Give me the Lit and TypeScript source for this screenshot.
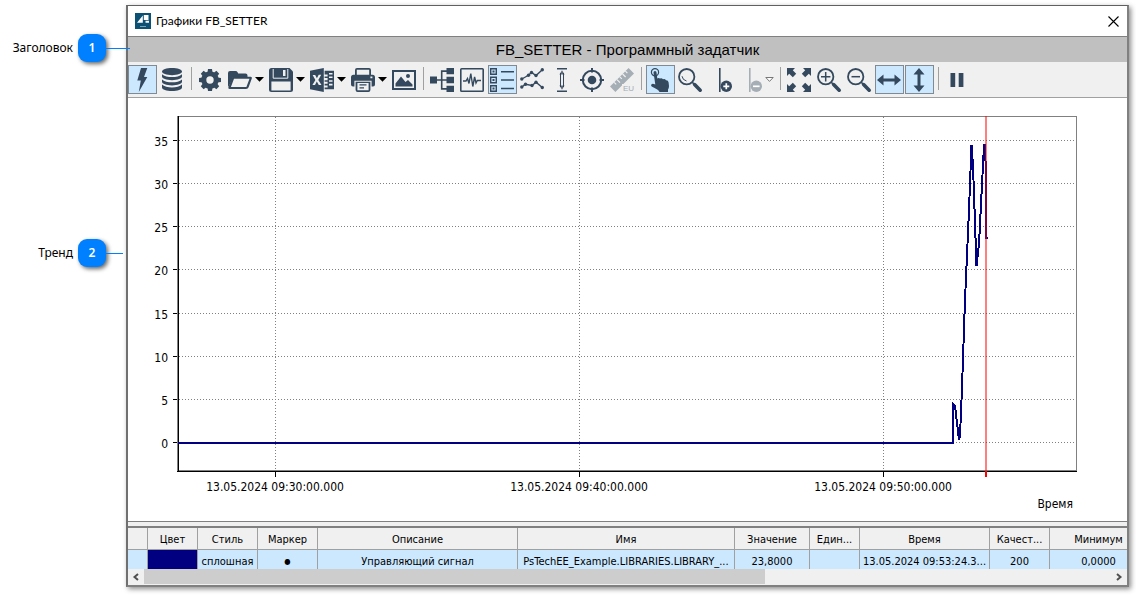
import { LitElement, html, svg, css, nothing } from "lit";
import type { SVGTemplateResult } from "lit";
import { customElement, property } from "lit/decorators.js";
import { classMap } from "lit/directives/class-map.js";

const magnifier = svg`
  <circle cx="8.7" cy="8.7" r="7.7" fill="none" stroke="currentColor" stroke-width="1.8"/>
  <path d="M14.2 14.2l2.2 2.2" stroke="currentColor" stroke-width="1.6"/>
  <path d="M16.6 16.6l5.6 5.6" stroke="currentColor" stroke-width="3.6" stroke-linecap="round"/>`;

const trendDots = (pts: number[][]) => svg`
  <polyline points=${pts.map((p) => p.join(",")).join(" ")} fill="none" stroke="currentColor" stroke-width="1.4"/>
  ${pts.map((p) => svg`<circle cx=${p[0]} cy=${p[1]} r="1.7"/>`)}`;

const ICONS: Record<string, SVGTemplateResult> = {
  bolt: svg`<path d="M11 0H17.3L14 9H17.3L8.8 24L10.8 12.6H7.3Z"/>`,
  database: svg`
    <path d="M2 3.6C2 1.5 6.5 0 12 0S22 1.5 22 3.6 17.5 7.2 12 7.2 2 5.7 2 3.6Z"/>
    <path d="M2 6.2C4 8.2 8 9 12 9S20 8.2 22 6.2V8.6C22 10.6 17.5 12.2 12 12.2S2 10.6 2 8.6Z"/>
    <path d="M2 11.4C4 13.4 8 14.2 12 14.2S20 13.4 22 11.4V13.8C22 15.8 17.5 17.4 12 17.4S2 15.8 2 13.8Z"/>
    <path d="M2 16.6C4 18.6 8 19.4 12 19.4S20 18.6 22 16.6V19.4C22 21.4 17.5 23 12 23S2 21.4 2 19.4Z"/>`,
  gear: svg`
    <circle cx="12" cy="12" r="6.2" fill="none" stroke="currentColor" stroke-width="5"/>
    ${[0, 45, 90, 135, 180, 225, 270, 315].map(
      (a) => svg`<path d="M9.4 5L10 1H14L14.6 5Z" transform="rotate(${a} 12 12)"/>`
    )}`,
  folder: svg`
    <path d="M0 19V5Q0 3 2 3H7.5Q9 3 9.6 4.2L10.2 5.4H17.5Q19.5 5.4 19.5 7.4V9H5L2 16Z"/>
    <path fill-rule="evenodd" d="M5.6 8.8H22.6Q24.4 8.8 23.8 10.6L20.6 19.2Q20 21 18 21H1.6Q-.2 21 .4 19.2L3.8 10.2Q4.3 8.8 5.6 8.8ZM6 10.8L2.9 19H18.4L21.5 10.8Z"/>`,
  save: svg`
    <path d="M2.5 0H20.5L24 3.5V21.5Q24 24 21.5 24H2.5Q0 24 0 21.5V2.5Q0 0 2.5 0Z"/>
    <path d="M4.2 1V10.2H18.8V1" fill="none" stroke="#f0f0f0"/>
    <path d="M14 2H16.5V8H14ZM2.4 13.4H21.6V22.4H2.4Z" fill="#f0f0f0"/>`,
  excel: svg`
    <path fill-rule="evenodd" d="M0 2.8L13.8 0V24L0 21.2ZM2.6 7L5.4 12 2.4 17H5L6.8 13.5 8.8 17.1H11.5L8.3 12 11.2 6.8H8.7L6.9 10.2 5.2 7Z"/>
    <path fill-rule="evenodd" d="M14.6 2.8H24V21.2H14.6V19.6H17.6V17.4H14.6V15.8H17.6V13.7H14.6V12.2H17.6V10.1H14.6V8.6H17.6V6.5H14.6ZM19 5V6.5H22.5V5ZM19 8.6V10.1H22.5V8.6ZM19 12.2V13.7H22.5V12.2ZM19 15.8V17.4H22.5V15.8Z"/>`,
  print: svg`
    <path fill-rule="evenodd" d="M4 7V2Q4 0 6 0H18Q20 0 20 2V7ZM5.8 7H18.2V1.8H5.8Z"/>
    <path fill-rule="evenodd" d="M2.5 6.8H21.5Q24 6.8 24 9.3V16.5Q24 18.5 22 18.5H20.6V12.8H3.4V18.5H2Q0 18.5 0 16.5V9.3Q0 6.8 2.5 6.8ZM19.4 8.6V10.2H21.4V8.6Z"/>
    <path fill-rule="evenodd" d="M4.6 13.8H19.4V22Q19.4 24 17.4 24H6.6Q4.6 24 4.6 22ZM6.4 15V22.2H17.6V15Z"/>
    <path d="M8.5 16.2H15.5V17.6H8.5ZM8.5 19.2H13V20.6H8.5Z"/>`,
  picture: svg`
    <path fill-rule="evenodd" d="M0 2H24V22H0ZM2 4V20H22V4Z"/>
    <path d="M3.5 18.5V15.5L9 8.5L13.5 14L16 12L20.5 16.5V18.5Z"/><circle cx="16" cy="8" r="2"/>`,
  tree: svg`
    <path d="M0 8.5H7V15.5H0ZM16.5 0H24V6.3H16.5ZM16.5 8.8H24V15.2H16.5ZM16.5 17.7H24V24H16.5Z"/>
    <path d="M6 12H17M17 3.1H11.7V20.9H17" fill="none" stroke="currentColor" stroke-width="1.6"/>`,
  pulse: svg`
    <rect x=".8" y=".8" width="22.4" height="22.4" rx=".8" fill="none" stroke="currentColor" stroke-width="1.6"/>
    <path d="M3 13H6L7.5 10.5 9 15.5 10.8 5.5 12.8 18.5 14.6 9 16 15 17.3 12.5H21" fill="none" stroke="currentColor" stroke-width="1.4"/>`,
  legend: svg`
    ${[0, 8.5, 17].map(
      (y) => svg`<path fill-rule="evenodd" transform="translate(0 ${y})" d="M0 0H7V7H0ZM1.4 1.4V5.6H5.6V1.4ZM2.5 2.5H4.5V4.5H2.5Z"/>`
    )}
    <path d="M11 3H24V4.5H11ZM11 11.3H24V12.8H11ZM11 19.8H24V21.3H11Z"/>`,
  trends: svg`
    ${trendDots([[1.8, 11], [8.5, 7.3], [11.5, 4.5], [16, 7.5], [22.3, 1.8]])}
    ${trendDots([[1.8, 19], [5.5, 16.3], [12, 17.5], [16, 14.2], [22.3, 19.5]])}`,
  extent: svg`
    <path d="M7 0H17V1.6H7ZM7 22.4H17V24H7Z"/>
    <path d="M10.5 5V19M13.5 5V19" fill="none" stroke="currentColor" stroke-width="1"/>
    <path d="M12 2.3L14.6 6.5H9.4ZM12 21.7L14.6 17.5H9.4Z" opacity=".8"/>`,
  target: svg`
    <circle cx="12" cy="12" r="9.2" fill="none" stroke="currentColor" stroke-width="2"/>
    <circle cx="12" cy="12" r="4.3"/>
    <path d="M11 0H13V4.5H11ZM11 19.5H13V24H11ZM0 11H4.5V13H0ZM19.5 11H24V13H19.5Z"/>`,
  ruler: svg`
    <path d="M0 18.6L18.6 0L24 5.4L5.4 24Z"/>
    <path d="M4.2 14.4l2 2M7 11.6l3 3M9.8 8.8l2 2M12.6 6l3 3M15.4 3.2l2 2" stroke="#f0f0f0" stroke-width="1.2"/>
    <rect x="12" y="16" width="12" height="8" fill="#f0f0f0"/>
    <text class="eu" x="13" y="23">EU</text>`,
  hand: svg`
    <circle cx="7" cy="4.2" r="3.6" fill="none" stroke="currentColor" stroke-width="1.2"/>
    <path d="M5.5 4.5Q5.5 3 7 3T8.5 4.5L9.3 10.5Q10.5 9.3 12 10.5 13.6 9.5 15 11.2 16.8 10.3 18 12.3 20.3 12.2 20.6 14.5L21 18Q21 20 20 21.5V24H11.5L10.5 22.5Q9.5 21.5 7.5 20.5L3.7 18.5Q2.5 17.5 3.5 16.3 4.5 15.3 7.3 16.6Z"/>`,
  search: svg`${magnifier}<path d="M4 8.2Q4.5 12 8.5 13" fill="none" stroke="currentColor" stroke-width="1"/>`,
  cursorAdd: svg`
    <path d="M11 0H12.6V24H11Z"/>
    <circle cx="18.3" cy="18.3" r="5.7"/>
    <path d="M18.3 15.3V21.3M15.3 18.3H21.3" stroke="#fff" stroke-width="1.7"/>`,
  cursorRemove: svg`
    <path d="M11 0H12.6V24H11Z"/>
    <circle cx="18.3" cy="18.3" r="5.7"/>
    <path d="M15 18.3H21.6" stroke="#fff" stroke-width="1.7"/>`,
  expand: svg`${[0, 90, 180, 270].map(
    (a) => svg`<path transform="rotate(${a} 12 12)" d="M0 0H8L5.8 2.2 9.2 5.8 5.8 9.2 2.2 5.8 0 8Z"/>`
  )}`,
  zoomIn: svg`${magnifier}<path d="M8.7 4V13.4M4 8.7H13.4" stroke="currentColor" stroke-width="1.5"/>`,
  zoomOut: svg`${magnifier}<path d="M4.5 8.7H13" stroke="currentColor" stroke-width="1.5"/>`,
  horizontal: svg`<path d="M0 12L6.5 6.5V10.5H17.5V6.5L24 12L17.5 17.5V13.5H6.5V17.5Z"/>`,
  vertical: svg`<path d="M12 0L17.5 6.5H13.5V17.5H17.5L12 24L6.5 17.5H10.5V6.5H6.5Z"/>`,
  pause: svg`<path d="M5.5 5H10.2V19H5.5ZM13.7 5H18.4V19H13.7Z"/>`,
};

interface Tool {
  icon: string;
  label: string;
  on?: boolean;
  menu?: boolean;
  disabled?: boolean;
}

const GROUPS: Tool[][] = [
  [
    { icon: "bolt", label: "Оперативный режим", on: true },
    { icon: "database", label: "Исторический режим" },
  ],
  [
    { icon: "gear", label: "Настройки" },
    { icon: "folder", label: "Открыть", menu: true },
    { icon: "save", label: "Сохранить", menu: true },
    { icon: "excel", label: "Экспорт в Excel", menu: true },
    { icon: "print", label: "Печать", menu: true },
    { icon: "picture", label: "Сохранить изображение" },
  ],
  [
    { icon: "tree", label: "Дерево сигналов" },
    { icon: "pulse", label: "Тренд" },
    { icon: "legend", label: "Легенда", on: true },
    { icon: "trends", label: "Графики" },
    { icon: "extent", label: "Шкала" },
    { icon: "target", label: "Центрировать" },
    { icon: "ruler", label: "Единицы измерения", disabled: true },
  ],
  [
    { icon: "hand", label: "Перемещение", on: true },
    { icon: "search", label: "Лупа" },
    { icon: "cursorAdd", label: "Добавить визир" },
    { icon: "cursorRemove", label: "Удалить визир", menu: true, disabled: true },
  ],
  [
    { icon: "expand", label: "Показать всё" },
    { icon: "zoomIn", label: "Увеличить" },
    { icon: "zoomOut", label: "Уменьшить" },
    { icon: "horizontal", label: "По горизонтали", on: true },
    { icon: "vertical", label: "По вертикали", on: true },
  ],
  [{ icon: "pause", label: "Пауза" }],
];

@customElement("tool-button")
class ToolButton extends LitElement {
  @property({ attribute: false }) tool!: Tool;

  static styles = css`
    :host {
      display: flex;
      color: #34495e;
    }
    .tool {
      box-sizing: border-box;
      width: 29px;
      height: 29px;
      margin: 0;
      padding: 2px 2px 1px 1px;
      border: 1px solid transparent;
      background: none;
      color: inherit;
    }
    .tool.on {
      background: #cce8ff;
      border-color: #808a94;
    }
    .tool:disabled {
      color: #a5adb5;
    }
    .icon {
      display: block;
      width: 24px;
      height: 24px;
      fill: currentColor;
      overflow: visible;
    }
    .eu {
      font: 8px "Liberation Sans", sans-serif;
    }
    .drop {
      width: 11px;
      height: 29px;
      padding: 0 2px 0 0;
      border: 0;
      background: none;
    }
    .caret {
      display: block;
      width: 9px;
      height: 5px;
    }
  `;

  render() {
    const t = this.tool;
    return html`
      <button class=${classMap({ tool: true, on: !!t.on })} aria-label=${t.label} ?disabled=${!!t.disabled}>
        <svg class="icon" viewBox="0 0 24 24" aria-hidden="true">${ICONS[t.icon]}</svg>
      </button>
      ${t.menu
        ? html`<button class="drop" aria-label=${t.label + ": меню"} ?disabled=${!!t.disabled}>
            <svg class="caret" viewBox="0 0 9 5" aria-hidden="true">
              ${t.disabled
                ? svg`<path d="M.8 .5H8.2L4.5 4.4Z" fill="#fff" stroke="#777"/>`
                : svg`<path d="M0 0H9L4.5 4.8Z"/>`}
            </svg>
          </button>`
        : nothing}
    `;
  }
}

const PLOT_W = 900;
const PLOT_H = 356;
const Y_TICKS = [35, 30, 25, 20, 15, 10, 5, 0];
const X_TICKS = [
  { at: 98, label: "13.05.2024 09:30:00.000" },
  { at: 402, label: "13.05.2024 09:40:00.000" },
  { at: 706, label: "13.05.2024 09:50:00.000" },
];
const CURSOR_AT = 809;
const SERIES = [
  [1, 327], [776, 327], [776, 288], [778, 290], [782, 324], [783, 320], [785, 272],
  [788, 184], [790, 139], [792, 94], [794.5, 29], [796, 50], [799.5, 150], [802, 128],
  [807, 29], [808, 29], [809, 60], [809, 122], [811, 122],
];
const yOf = (v: number) => Math.floor(326.5 - (v * 302) / 35) + 0.5;
const pct = (x: number) => `${(x / PLOT_W) * 100}%`;

@customElement("trend-chart")
class TrendChart extends LitElement {
  static styles = css`
    :host {
      display: block;
      padding: 18px 50px 8px 49px;
      background: #fff;
      font: 12px/18px "DejaVu Sans Condensed", "Noto Sans", sans-serif;
    }
    .plot {
      display: block;
      width: 100%;
      height: 356px;
      overflow: visible;
      shape-rendering: crispEdges;
    }
    .grid {
      stroke: #808080;
      stroke-dasharray: 1 2;
    }
    .frame {
      stroke: #808080;
    }
    .axis {
      stroke: #000;
    }
    .series {
      fill: none;
      stroke: #000080;
      stroke-width: 2px;
      vector-effect: non-scaling-stroke;
    }
    .cursor {
      stroke: #f00;
      stroke-opacity: 0.5;
      stroke-width: 2px;
    }
    .cursor-tick {
      stroke: #f00;
      stroke-width: 2px;
    }
    .y-label {
      text-anchor: end;
    }
    .x-label {
      text-anchor: middle;
    }
    .axis-name {
      padding: 23px 4px 0 0;
      text-align: right;
    }
  `;

  render() {
    return html`
      <svg class="plot" role="img" aria-label="Тренд">
        ${Y_TICKS.map((v) => {
          const y = yOf(v);
          return svg`
            <line class="grid" x1="2" x2="100%" y1=${y} y2=${y}/>
            <line class="axis" x1="-4" x2="1" y1=${y} y2=${y}/>
            <text class="y-label" x="-9" y=${y + 5}>${v}</text>`;
        })}
        ${X_TICKS.map(
          (t) => svg`
            <svg x=${pct(t.at)} overflow="visible">
              <line class="grid" x1=".5" x2=".5" y1="1" y2="354"/>
              <line class="axis" x1=".5" x2=".5" y1="356" y2="361"/>
              <text class="x-label" x="0" y="375">${t.label}</text>
            </svg>`
        )}
        <line class="frame" x1="0" x2="100%" y1=".5" y2=".5"/>
        <line class="frame" x1="0" x2="100%" y1="354.5" y2="354.5"/>
        <svg x="100%" overflow="visible"><line class="frame" x1="-.5" x2="-.5" y1="0" y2="355"/></svg>
        <line class="frame" x1=".5" x2=".5" y1="0" y2="355"/>
        <line class="axis" x1="1.5" x2="1.5" y1="0" y2="356"/>
        <line class="axis" x1="0" x2="100%" y1="355.5" y2="355.5"/>
        <svg width="100%" height="356" viewBox="0 0 ${PLOT_W} ${PLOT_H}" preserveAspectRatio="none">
          <polyline class="series" points=${SERIES.map((p) => p.join(",")).join(" ")}/>
        </svg>
        <line class="cursor" x1=${pct(CURSOR_AT)} x2=${pct(CURSOR_AT)} y1="0" y2="355"/>
        <line class="cursor-tick" x1=${pct(CURSOR_AT)} x2=${pct(CURSOR_AT)} y1="355" y2="361"/>
      </svg>
      <div class="axis-name">Время</div>
    `;
  }
}

const COLUMNS = [
  { title: "", cls: "w20" },
  { title: "Цвет", cls: "w50" },
  { title: "Стиль", cls: "w60" },
  { title: "Маркер", cls: "w60" },
  { title: "Описание", cls: "w200" },
  { title: "Имя", cls: "auto" },
  { title: "Значение", cls: "w75" },
  { title: "Единица", short: "Един...", cls: "w50" },
  { title: "Время", cls: "w130" },
  { title: "Качество", short: "Качест...", cls: "w60" },
  { title: "Минимум", cls: "w98" },
];
const ROW = [
  "", "", "сплошная", "●", "Управляющий сигнал", "PsTechEE_Example.LIBRARIES.LIBRARY_...",
  "23,8000", "", "13.05.2024 09:53:24.3...", "200", "0,0000",
];

@customElement("signal-table")
class SignalTable extends LitElement {
  static styles = css`
    :host {
      display: block;
      border-top: 2px solid #808080;
      font: 11px/14px "DejaVu Sans Condensed", "Noto Sans", sans-serif;
    }
    .viewport {
      overflow: hidden;
    }
    .signals {
      width: calc(100% + 21px);
      table-layout: fixed;
      border-collapse: separate;
      border-spacing: 0;
    }
    .w20 { width: 20px; }
    .w50 { width: 50px; }
    .w60 { width: 60px; }
    .w75 { width: 75px; }
    .w98 { width: 98px; }
    .w130 { width: 130px; }
    .w200 { width: 200px; }
    th,
    td {
      box-sizing: border-box;
      padding: 2px 1px 0;
      border-right: 1px solid #a0a0a0;
      text-align: center;
      white-space: nowrap;
      overflow: hidden;
      font-weight: normal;
    }
    th {
      height: 22px;
      background: #f0f0f0;
      border-bottom: 1px solid #a0a0a0;
    }
    td {
      height: 19px;
      padding-top: 5px;
      background: #cce8ff;
    }
    .swatch {
      background: #000080;
    }
    .marker {
      font-size: 8px;
    }
    .scrollbar {
      display: flex;
      height: 16px;
      background: #f0f0f0;
    }
    .track {
      flex: 1;
      padding-bottom: 1px;
    }
    .thumb {
      width: 64.2%;
      height: 100%;
      background: #cdcdcd;
    }
    .step {
      width: 16px;
      padding: 0;
      border: 0;
      background: none;
    }
    .step svg {
      display: block;
      margin: auto;
      fill: none;
      stroke: #505050;
      stroke-width: 2px;
    }
  `;

  render() {
    const cellClass = (i: number) => (i === 1 ? "swatch" : i === 3 ? "marker" : "");
    return html`
      <div class="viewport">
        <table class="signals">
          <thead>
            <tr>
              ${COLUMNS.map((c) => html`<th class=${c.cls} scope="col">${c.short ?? c.title}</th>`)}
            </tr>
          </thead>
          <tbody>
            <tr>
              ${ROW.map((v, i) => html`<td class=${cellClass(i)}>${v}</td>`)}
            </tr>
          </tbody>
        </table>
      </div>
      <div class="scrollbar">
        <button class="step" aria-label="Влево">
          <svg width="8" height="8" viewBox="0 0 8 8"><path d="M6 1L2.5 4L6 7"/></svg>
        </button>
        <div class="track"><div class="thumb"></div></div>
        <button class="step" aria-label="Вправо">
          <svg width="8" height="8" viewBox="0 0 8 8"><path d="M2 1L5.5 4L2 7"/></svg>
        </button>
      </div>
    `;
  }
}

@customElement("app-root")
class AppRoot extends LitElement {
  static styles = css`
    :host {
      display: grid;
      grid-template-columns: 126px minmax(0, 1fr);
      padding: 5px 7px 9px 0;
      background: #fff;
      color: #000;
      font: 12px/16px "Noto Sans", "Open Sans", sans-serif;
    }
    .notes {
      display: flex;
      flex-direction: column;
      gap: 177px;
      padding-top: 29px;
      z-index: 1;
    }
    .note {
      display: flex;
      align-items: center;
      justify-content: flex-end;
    }
    .badge {
      width: 28px;
      margin-left: 5px;
      border-radius: 9px;
      background: #0080ff;
      color: #fff;
      font-weight: 600;
      line-height: 28px;
      text-align: center;
      box-shadow: 2px 2px 4px rgba(0, 0, 0, 0.6);
    }
    .lead {
      width: 17px;
      height: 1px;
      margin-right: 3px;
      background: #0080ff;
    }
    .lead.long {
      width: 24px;
      margin-right: -4px;
    }
    .window {
      border: 2px solid #808080;
      border-top: 1px solid #606060;
      border-left-color: #707070;
      background: #f0f0f0;
      box-shadow: 2px 2px 5px rgba(0, 0, 0, 0.45);
    }
    .titlebar {
      box-sizing: border-box;
      display: flex;
      align-items: center;
      gap: 5px;
      height: 30px;
      padding: 0 8px 0 7px;
      background: #fff;
    }
    .name {
      flex: 1;
      font-family: Lato, "Noto Sans", sans-serif;
    }
    .close {
      display: block;
      padding: 0;
      border: 0;
      background: none;
    }
    .close svg,
    .logo {
      display: block;
    }
    .caption {
      margin: 0;
      border-top: 1px solid #808080;
      background: #c0c0c0;
      font: 15px/25px "Liberation Sans", Arial, sans-serif;
      text-align: center;
    }
    .toolbar {
      display: flex;
      flex-wrap: wrap;
      gap: 1px;
      padding: 3px 0;
      border-bottom: 1px solid #a0a0a0;
    }
    .sep {
      width: 1px;
      height: 23px;
      margin: 2px 3px;
      background: #a0a0a0;
    }
    .split {
      height: 4px;
      border-top: 1px solid #808080;
    }
  `;

  render() {
    return html`
      <aside class="notes">
        <div class="note"><span>Заголовок</span><span class="badge">1</span><span class="lead long"></span></div>
        <div class="note"><span>Тренд</span><span class="badge">2</span><span class="lead"></span></div>
      </aside>
      <main class="window">
        <header class="titlebar">
          <svg class="logo" width="16" height="16" viewBox="0 0 16 16" aria-hidden="true">
            <rect width="16" height="16" fill="#0b5173"/>
            <path d="M2 9.8L7.8 2.5V9.8ZM8.8 2H13.5V7H8.8ZM10.5 7.8H14V9.8H10.5Z" fill="#fff"/>
            <path d="M5 13H11V14H5Z" fill="#7ba3b6"/>
          </svg>
          <span class="name">Графики FB_SETTER</span>
          <button class="close" aria-label="Закрыть">
            <svg width="11" height="11" viewBox="0 0 11 11"><path d="M.5 .5L10.5 10.5M10.5 .5L.5 10.5" stroke="#000" stroke-width="1.1"/></svg>
          </button>
        </header>
        <h1 class="caption">FB_SETTER - Программный задатчик</h1>
        <div class="toolbar" role="toolbar">
          ${GROUPS.map(
            (g, i) => html`${i ? html`<span class="sep"></span>` : nothing}${g.map(
              (t) => html`<tool-button .tool=${t}></tool-button>`
            )}`
          )}
        </div>
        <trend-chart></trend-chart>
        <div class="split"></div>
        <signal-table></signal-table>
      </main>
    `;
  }
}
